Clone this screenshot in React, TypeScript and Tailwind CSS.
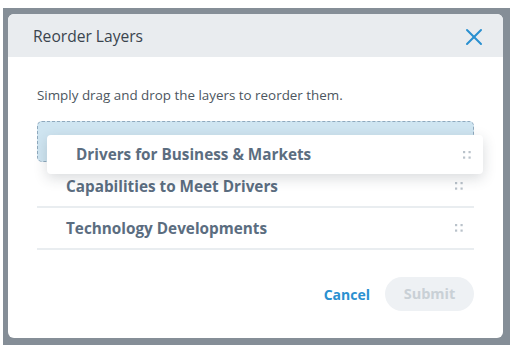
import { X } from 'lucide-react';

const font = { fontFamily: '"Open Sans", "Noto Sans", sans-serif' };

function Grip() {
  return (
    <svg width="8" height="8" viewBox="0 0 8 8" className="text-[#b9c2ca]">
      <rect x="0" y="0" width="2.2" height="2.2" fill="currentColor" />
      <rect x="5.5" y="0" width="2.2" height="2.2" fill="currentColor" />
      <rect x="0" y="5.5" width="2.2" height="2.2" fill="currentColor" />
      <rect x="5.5" y="5.5" width="2.2" height="2.2" fill="currentColor" />
    </svg>
  );
}

function Row({ label }: { label: string }) {
  return (
    <div className="flex h-[42px] items-center justify-between border-b-2 border-[#e9edf0] pl-[29px] pr-[11px]">
      <span className="text-[15.3px] font-bold text-[#5b6d80]">{label}</span>
      <Grip />
    </div>
  );
}

/**
 * Reorder layers dialog, mid-drag
 */
export default function App() {
  return (
    <div className="h-[356px] w-[518px] bg-white pl-[3px] pt-[8px]" style={font}>
      <div className="h-[337px] w-[507px] bg-[#858e97] pl-[5px] pt-[6px]">
        <div className="flex h-[324px] w-[495px] flex-col overflow-hidden rounded-[6px] bg-white">
          {/* Header */}
          <div className="flex h-[43px] items-center justify-between bg-[#e9ecef] pl-[25px] pr-[15px] pt-[2px]">
            <span className="text-[15.6px] text-[#3a444e]">Reorder Layers</span>
            <X size={28} strokeWidth={1.7} className="text-[#2a90d0]" />
          </div>

          {/* Body */}
          <div className="flex flex-1 flex-col px-[29px] pt-[28px]">
            <p className="text-[13.4px] leading-[20px] text-[#4c5660]">
              Simply drag and drop the layers to reorder them.
            </p>

            <div className="relative mt-[16px]">
              <div className="h-[41px] rounded-[5px] border border-dashed border-[#8fa9bd] bg-[#cfe5f1]" />
              {/* Dragged item */}
              <div className="absolute left-[10px] top-[14px] flex h-[39px] w-[436px] items-center justify-between rounded-[4px] bg-white pl-[29px] pr-[12px] shadow-[0_4px_14px_rgba(40,50,60,0.18)]">
                <span className="text-[15.3px] font-bold text-[#5b6d80]">Drivers for Business &amp; Markets</span>
                <Grip />
              </div>
              <div className="mt-[4px]">
                <Row label="Capabilities to Meet Drivers" />
                <Row label="Technology Developments" />
              </div>
            </div>

            {/* Footer */}
            <div className="mt-[27px] flex items-center justify-end gap-[15px]">
              <button className="text-[14px] font-bold text-[#2a90d0]">Cancel</button>
              <button className="h-[34px] w-[89px] rounded-full bg-[#eef1f4] text-[14.5px] font-bold text-[#c9d0d6]">
                Submit
              </button>
            </div>
          </div>
        </div>
      </div>
    </div>
  );
}
